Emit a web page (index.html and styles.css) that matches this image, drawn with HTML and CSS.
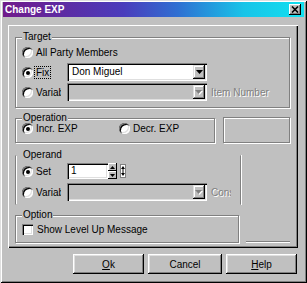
FILE: index.html
```html
<!DOCTYPE html>
<html lang="en">
<head>
    <meta charset="UTF-8">
    <title>Change EXP</title>
    <link rel="stylesheet" href="styles.css">
</head>
<body>
    <div class="window">
        <div class="titlebar">
            <span class="title">Change EXP</span>
            <span class="close-btn">
                <svg width="8" height="7" viewBox="0 0 8 7"><path d="M1 0.5L7 6.5M7 0.5L1 6.5" stroke="#000" stroke-width="1.6"/></svg>
            </span>
        </div>

        <div class="panel">
            <fieldset class="group target">
                <legend>Target</legend>
                <div class="group-body rows">
                    <div class="opt-row">
                        <span class="choice"><span class="radio"></span><span class="opt-label">All Party Members</span></span>
                    </div>
                    <div class="opt-row">
                        <span class="choice"><span class="radio checked"></span><span class="opt-label focus">Fix</span></span>
                        <div class="combo">
                            <span class="combo-text">Don Miguel</span>
                            <span class="drop-btn"><svg width="7" height="4"><polygon points="0,0 7,0 3.5,4" fill="#000"/></svg></span>
                        </div>
                    </div>
                    <div class="opt-row">
                        <span class="choice"><span class="radio"></span><span class="opt-label clip">Variable</span></span>
                        <div class="combo disabled">
                            <span class="combo-text"></span>
                            <span class="drop-btn"><svg width="8" height="5"><polygon points="1,1 8,1 4.5,5" fill="#fff"/><polygon points="0,0 7,0 3.5,4" fill="#808080"/></svg></span>
                        </div>
                        <span class="hint">Item Number</span>
                    </div>
                </div>
            </fieldset>

            <div class="split-row">
                <fieldset class="group operation">
                    <legend>Operation</legend>
                    <div class="group-body">
                        <div class="opt-row short">
                            <span class="choice wide"><span class="radio checked"></span><span class="opt-label">Incr. EXP</span></span>
                            <span class="choice"><span class="radio"></span><span class="opt-label">Decr. EXP</span></span>
                        </div>
                    </div>
                </fieldset>
                <div class="blank-box"></div>
            </div>

            <fieldset class="group operand">
                <legend>Operand</legend>
                <div class="group-body">
                    <div class="opt-row spin-row">
                        <span class="choice"><span class="radio checked"></span><span class="opt-label">Set</span></span>
                        <div class="spin-edit"><span class="edit-value">1</span></div>
                        <div class="spin-btns">
                            <span class="spin-btn"><svg width="5" height="3"><polygon points="2.5,0 5,3 0,3" fill="#000"/></svg></span>
                            <span class="spin-btn"><svg width="5" height="3"><polygon points="0,0 5,0 2.5,3" fill="#000"/></svg></span>
                        </div>
                        <span class="mini-spin">
                            <svg width="6" height="14" viewBox="0 0 6 14">
                                <rect x="0.5" y="0.5" width="5" height="13" fill="#fff" stroke="#808080"/>
                                <polygon points="3,2 5,5 1,5" fill="#000"/>
                                <polygon points="1,9 5,9 3,12" fill="#000"/>
                                <line x1="3" y1="5" x2="3" y2="9" stroke="#000"/>
                            </svg>
                        </span>
                    </div>
                    <div class="opt-row">
                        <span class="choice"><span class="radio"></span><span class="opt-label clip">Variable</span></span>
                        <div class="combo disabled">
                            <span class="combo-text"></span>
                            <span class="drop-btn"><svg width="8" height="5"><polygon points="1,1 8,1 4.5,5" fill="#fff"/><polygon points="0,0 7,0 3.5,4" fill="#808080"/></svg></span>
                        </div>
                        <span class="hint short-hint">Constant</span>
                    </div>
                </div>
            </fieldset>

            <div class="split-row">
                <fieldset class="group option">
                    <legend>Option</legend>
                    <div class="group-body">
                        <div class="opt-row short">
                            <span class="checkbox"></span><span class="opt-label">Show Level Up Message</span>
                        </div>
                    </div>
                </fieldset>
                <div class="stray-line"></div>
            </div>
        </div>

        <div class="button-row">
            <button class="btn ok"><u>O</u>k</button>
            <button class="btn cancel">Cancel</button>
            <button class="btn help"><u>H</u>elp</button>
        </div>
    </div>
</body>
</html>
```

FILE: styles.css
```css
body {
    margin: 0;
    background-color: #c0c0c0;
    font-family: "Liberation Sans", Arial, sans-serif;
    font-size: 10px;
    color: #000;
}
.window {
    width: 307px;
    height: 283px;
    box-sizing: border-box;
    padding: 2px 3px 0 3px;
    background-color: #c0c0c0;
    box-shadow: inset 1px 1px #dfdfdf, inset -1px -1px #000, inset 2px 2px #fff, inset -2px -2px #808080;
}
.titlebar {
    height: 15px;
    display: flex;
    align-items: center;
    justify-content: space-between;
    padding-left: 2px;
    background: linear-gradient(90deg, #701a8a 0%, #4a3cbc 40%, #2f6fd2 58%, #18c4e8 80%, #12e0f0 100%);
}
.title {
    color: #fff;
    font-weight: bold;
    font-size: 10px;
    line-height: 15px;
}
.close-btn {
    width: 12px;
    height: 11px;
    margin-right: 3px;
    display: flex;
    align-items: center;
    justify-content: center;
    background-color: #c0c0c0;
    box-shadow: inset -1px -1px #000, inset 1px 1px #fff, inset -2px -2px #808080;
}
.panel {
    margin: 8px 6px 0 5px;
    height: 223px;
    box-sizing: border-box;
    padding: 6px 8px 5px 7px;
    box-shadow: inset 1px 1px #fff, inset -1px -1px #000, inset -2px -2px #808080;
}
.group {
    margin: 0;
    padding: 0;
    min-width: 0;
    border: 1px solid #808080;
    box-shadow: inset 1px 1px #fff, 1px 1px #fff;
}
.group legend {
    margin-left: 6px;
    padding: 0 1px;
    line-height: 12px;
    background-color: #c0c0c0;
}
.group-body {
    padding-left: 6px;
}
.target .group-body {
    display: grid;
    grid-template-rows: 18px 18px 18px;
    row-gap: 2px;
    padding-bottom: 6px;
}
.split-row {
    display: flex;
}
.operation {
    width: 198px;
    margin-top: 4px;
}
.operation .group-body {
    margin-top: -2px;
    padding-bottom: 8px;
}
.blank-box {
    flex: 1;
    margin: 9px 0 0 8px;
    border: 1px solid #808080;
    box-shadow: inset 1px 1px #fff, 1px 1px #fff;
}
.operand {
    width: 224px;
    margin-top: 6px;
    border-top-color: transparent;
    border-bottom-color: transparent;
    box-shadow: inset 1px 0 #fff, 1px 0 #fff;
}
.operand .group-body {
    padding-top: 2px;
    padding-bottom: 3px;
}
.operand .opt-row + .opt-row {
    margin-top: 4px;
}
.option {
    width: 224px;
    margin-top: 4px;
}
.option .group-body {
    padding-top: 2px;
    padding-bottom: 7px;
}
.stray-line {
    width: 44px;
    height: 0;
    margin-left: 7px;
    align-self: flex-end;
    margin-bottom: 1px;
    border-bottom: 1px solid #808080;
    box-shadow: 0 1px #fff;
}
.opt-row {
    display: flex;
    align-items: center;
    height: 18px;
}
.opt-row.short {
    height: 12px;
}
.opt-row.spin-row {
    height: 16px;
}
.choice {
    display: flex;
    align-items: center;
    width: 45px;
    flex-shrink: 0;
}
.choice.wide {
    width: 97px;
}
.radio {
    position: relative;
    width: 11px;
    height: 11px;
    flex-shrink: 0;
    border-radius: 50%;
    background-color: #fff;
    box-shadow: inset 1px 1px #808080, inset 2px 2px #000, inset -1px -1px #fff, inset -2px -2px #dfdfdf;
}
.radio.checked::after {
    content: "";
    position: absolute;
    left: 4px;
    top: 4px;
    width: 4px;
    height: 4px;
    border-radius: 50%;
    background-color: #000;
}
.checkbox {
    width: 11px;
    height: 11px;
    flex-shrink: 0;
    background-color: #fff;
    box-shadow: inset 1px 1px #808080, inset 2px 2px #000, inset -1px -1px #fff, inset -2px -2px #dfdfdf;
}
.opt-label {
    margin-left: 1px;
    padding: 0 1px;
    border: 1px solid transparent;
    line-height: 11px;
    white-space: nowrap;
}
.option .opt-label {
    margin-left: 2px;
}
.opt-label.focus {
    border: 1px dotted #000;
}
.opt-label.clip {
    width: 24px;
    overflow: hidden;
}
.combo {
    display: flex;
    align-items: center;
    width: 140px;
    height: 18px;
    box-sizing: border-box;
    padding: 2px;
    background-color: #fff;
    box-shadow: inset 1px 1px #808080, inset 2px 2px #000, inset -1px -1px #fff, inset -2px -2px #dfdfdf;
}
.combo.disabled {
    background-color: #c0c0c0;
}
.combo-text {
    flex: 1;
    padding-left: 3px;
    line-height: 12px;
}
.drop-btn {
    width: 12px;
    height: 14px;
    display: flex;
    align-items: center;
    justify-content: center;
    background-color: #c0c0c0;
    box-shadow: inset -1px -1px #000, inset 1px 1px #dfdfdf, inset -2px -2px #808080, inset 2px 2px #fff;
}
.hint {
    margin-left: 4px;
    color: #808080;
    text-shadow: 1px 1px #fff;
    white-space: nowrap;
}
.short-hint {
    width: 20px;
    overflow: hidden;
}
.spin-edit {
    width: 41px;
    height: 16px;
    box-sizing: border-box;
    padding: 2px 2px 2px 4px;
    background-color: #fff;
    box-shadow: inset 1px 1px #808080, inset 2px 2px #000, inset -1px -1px #fff, inset -2px -2px #dfdfdf;
}
.edit-value {
    line-height: 12px;
}
.spin-btns {
    display: flex;
    flex-direction: column;
    width: 9px;
    height: 16px;
}
.spin-btn {
    height: 8px;
    display: flex;
    align-items: center;
    justify-content: center;
    background-color: #c0c0c0;
    box-shadow: inset -1px -1px #000, inset 1px 1px #fff;
}
.mini-spin {
    display: flex;
    margin-left: 3px;
}
.button-row {
    display: flex;
    gap: 4px;
    margin: 6px 0 0 70px;
}
.btn {
    height: 20px;
    padding: 0;
    border: none;
    background-color: #c0c0c0;
    font-family: "Liberation Sans", Arial, sans-serif;
    font-size: 10px;
    color: #000;
    box-shadow: inset -1px -1px #000, inset 1px 1px #fff, inset -2px -2px #808080, inset 2px 2px #dfdfdf;
}
.btn.ok,
.btn.help {
    width: 71px;
}
.btn.cancel {
    width: 74px;
}
```
